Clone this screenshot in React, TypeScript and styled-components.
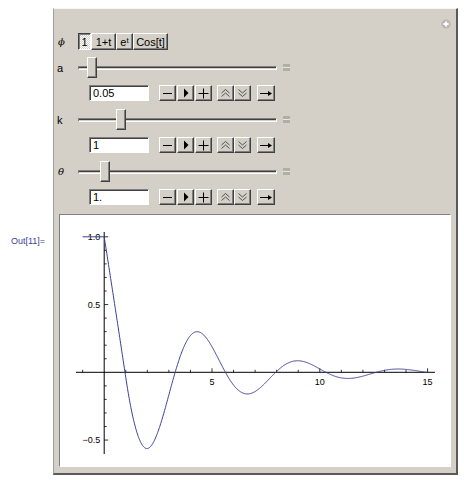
import React, { useMemo } from 'react';
import styled, { createGlobalStyle, css } from 'styled-components';

const GlobalStyle = createGlobalStyle`
  html, body {
    margin: 0;
    padding: 0;
    background: #ffffff;
  }
  body {
    font-family: "Liberation Sans", Arial, sans-serif;
  }
`;

const raised = css`
  border-style: solid;
  border-width: 1px;
  border-color: #ffffff #404040 #404040 #ffffff;
  box-shadow: inset -1px -1px 0 #808080;
`;

const Page = styled.div`
  display: flex;
  padding-top: 8px;
`;

const OutCell = styled.div`
  width: 53px;
  flex: none;
  box-sizing: border-box;
  padding: 228px 0 0 11px;
  font: 9px/11px "Liberation Sans", Arial, sans-serif;
  color: #40409a;
  white-space: nowrap;
`;

const Panel = styled.div`
  width: 405px;
  flex: none;
  box-sizing: border-box;
  display: flex;
  flex-direction: column;
  padding-bottom: 6px;
  background: #d4d0c8;
  border-style: solid;
  border-width: 1px 2px 2px 1px;
  border-color: #f6f5f1 #5a5a5a #5a5a5a #a0a0a0;
`;

const Header = styled.div`
  display: flex;
  justify-content: flex-end;
  height: 24px;
  box-sizing: border-box;
  padding: 10px 5px 0 0;
`;

const Row = styled.div<{ $gap?: number }>`
  display: flex;
  align-items: center;
  margin-top: ${({ $gap }) => $gap ?? 0}px;
`;

const LabelCell = styled.div<{ $greek?: boolean }>`
  width: 24px;
  flex: none;
  box-sizing: border-box;
  padding-left: 3px;
  font-size: 11px;
  line-height: 12px;
  color: #000;
  ${({ $greek }) =>
    $greek &&
    css`
      font-family: "DejaVu Serif", "Liberation Serif", serif;
      font-style: italic;
      font-size: 10px;
      padding-left: 4px;
    `}
`;

const SetterBar = styled.div`
  display: flex;
`;

const SetterButton = styled.div<{ $active?: boolean; $width: number }>`
  width: ${({ $width }) => $width}px;
  height: 17px;
  box-sizing: border-box;
  display: flex;
  align-items: center;
  justify-content: center;
  font-size: 11px;
  color: #000;
  white-space: nowrap;
  ${({ $active }) =>
    $active
      ? css`
          border-style: solid;
          border-width: 1px;
          border-color: #404040 #ffffff #ffffff #404040;
          box-shadow: inset 1px 1px 0 #808080;
          background-color: #d4d0c8;
          background-image: repeating-conic-gradient(#ffffff 0 25%, #d4d0c8 0 50%);
          background-size: 2px 2px;
        `
      : css`
          ${raised};
          background: #d4d0c8;
        `}
  sup {
    font-size: 8px;
    line-height: 0;
    position: relative;
    top: -1px;
    vertical-align: super;
  }
`;

const SliderBox = styled.div`
  position: relative;
  width: 199px;
  height: 21px;
  display: flex;
  align-items: center;
`;

const Track = styled.div`
  width: 100%;
  height: 4px;
  box-sizing: border-box;
  border-style: solid;
  border-width: 1px;
  border-color: #808080 #ffffff #ffffff #808080;
  background: linear-gradient(#404040 0 1px, #d4d0c8 1px);
`;

const Thumb = styled.div`
  position: absolute;
  top: 0;
  width: 10px;
  height: 21px;
  box-sizing: border-box;
  background: #d4d0c8;
  ${raised};
`;

const EndMark = styled.div`
  margin-left: 6px;
  width: 7px;
  height: 7px;
  box-sizing: border-box;
  border-top: 3px solid #b2aea6;
  border-bottom: 3px solid #b2aea6;
  background: #e8e6e2;
`;

const InputRow = styled.div<{ $gap: number }>`
  display: flex;
  align-items: center;
  margin-top: ${({ $gap }) => $gap}px;
  padding-left: 35px;
`;

const NumberField = styled.div`
  width: 60px;
  height: 16px;
  box-sizing: border-box;
  padding: 0 3px;
  display: flex;
  align-items: center;
  font-size: 11px;
  color: #000;
  background: #ffffff;
  border-style: solid;
  border-width: 1px;
  border-color: #808080 #ffffff #ffffff #808080;
  box-shadow: inset 1px 1px 0 #404040;
`;

const ButtonGroup = styled.div<{ $offset: number; $spacing: number }>`
  display: flex;
  gap: ${({ $spacing }) => $spacing}px;
  margin-left: ${({ $offset }) => $offset}px;
`;

const StepButton = styled.div<{ $width?: number }>`
  width: ${({ $width }) => $width ?? 17}px;
  height: 16px;
  box-sizing: border-box;
  display: flex;
  align-items: center;
  justify-content: center;
  background: #d4d0c8;
  ${raised};
  svg {
    display: block;
  }
`;

const PlotPane = styled.div`
  margin: 9px 5px 0 5px;
  height: 253px;
  box-sizing: border-box;
  background: #ffffff;
  border-style: solid;
  border-width: 1px;
  border-color: #808080 #ffffff #ffffff #808080;
  svg {
    display: block;
  }
`;

const AddIcon = () => (
  <svg width="10" height="10" viewBox="0 0 10 10">
    <circle cx="5" cy="5" r="4.6" fill="#bbb8b1" />
    <path d="M5 2.4v5.2M2.4 5h5.2" stroke="#ffffff" strokeWidth="1.8" />
  </svg>
);

const MinusGlyph = () => (
  <svg width="11" height="14" viewBox="0 0 11 14">
    <path d="M1 7.5h9" stroke="#000" strokeWidth="1" />
  </svg>
);

const PlayGlyph = () => (
  <svg width="11" height="14" viewBox="0 0 11 14">
    <path d="M4 2.5L8.5 7L4 11.5Z" fill="#000" />
  </svg>
);

const PlusGlyph = () => (
  <svg width="11" height="14" viewBox="0 0 11 14">
    <path d="M0.5 7.5h10M5.5 2.5v10" stroke="#000" strokeWidth="1" />
  </svg>
);

const FasterGlyph = () => (
  <svg width="11" height="14" viewBox="0 0 11 14">
    <path d="M1.5 7L5.5 3.5L9.5 7M1.5 10.5L5.5 7L9.5 10.5" fill="none" stroke="#444" strokeWidth="0.9" />
  </svg>
);

const SlowerGlyph = () => (
  <svg width="11" height="14" viewBox="0 0 11 14">
    <path d="M1.5 3.5L5.5 7L9.5 3.5M1.5 7L5.5 10.5L9.5 7" fill="none" stroke="#444" strokeWidth="0.9" />
  </svg>
);

const DirectionGlyph = () => (
  <svg width="14" height="14" viewBox="0 0 14 14">
    <path d="M1 7.5h9" stroke="#000" strokeWidth="1" />
    <path d="M9 5L13 7.5L9 10Z" fill="#000" />
  </svg>
);

type Param = {
  label: string;
  greek?: boolean;
  value: number;
  text: string;
  min: number;
  max: number;
};

const params: Param[] = [
  { label: 'a', value: 0.05, text: '0.05', min: 0, max: 1 },
  { label: 'k', value: 1, text: '1', min: 0, max: 5 },
  { label: 'θ', greek: true, value: 1, text: '1.', min: 0.1, max: 8 },
];

const choices = [
  { key: '1', width: 13 },
  { key: '1+t', width: 25 },
  { key: 'e^t', width: 17 },
  { key: 'Cos[t]', width: 35 },
];

const ParamControl = ({ p, first }: { p: Param; first: boolean }) => {
  const left = ((p.value - p.min) / (p.max - p.min)) * 189;
  return (
    <>
      <Row $gap={first ? 7 : 8}>
        <LabelCell $greek={p.greek}>{p.label}</LabelCell>
        <SliderBox>
          <Track />
          <Thumb style={{ left }} />
        </SliderBox>
        <EndMark />
      </Row>
      <InputRow $gap={7}>
        <NumberField>{p.text}</NumberField>
        <ButtonGroup $offset={10} $spacing={1}>
          <StepButton><MinusGlyph /></StepButton>
          <StepButton><PlayGlyph /></StepButton>
          <StepButton><PlusGlyph /></StepButton>
        </ButtonGroup>
        <ButtonGroup $offset={5} $spacing={0}>
          <StepButton><FasterGlyph /></StepButton>
          <StepButton><SlowerGlyph /></StepButton>
        </ButtonGroup>
        <ButtonGroup $offset={6} $spacing={0}>
          <StepButton $width={18}><DirectionGlyph /></StepButton>
        </ButtonGroup>
      </InputRow>
    </>
  );
};

// delay equation y'(t) = a y(t) - k y(t - theta), constant history y = 1
const solveDelay = (a: number, k: number, theta: number, T = 15, dt = 0.001) => {
  const n = Math.round(T / dt);
  const lag = Math.max(1, Math.round(theta / dt));
  const y = new Float64Array(n + 1);
  y[0] = 1;
  const delayed = (i: number) => (i - lag >= 0 ? y[i - lag] : 1);
  for (let i = 0; i < n; i++) {
    const f0 = a * y[i] - k * delayed(i);
    const yp = y[i] + dt * f0;
    const f1 = a * yp - k * delayed(i + 1);
    y[i + 1] = y[i] + (dt / 2) * (f0 + f1);
  }
  return { y, dt };
};

const W = 390;
const H = 251;
const X0 = 44.2;
const Y0 = 157.3;
const SX = 21.56;
const SY = 135.5;
const px = (t: number) => X0 + SX * t;
const py = (v: number) => Y0 - SY * v;

const Plot = () => {
  const path = useMemo(() => {
    const { y, dt } = solveDelay(0.036, 1.055, 1);
    const pts: string[] = [`M${px(-1).toFixed(2)} ${py(1).toFixed(2)}`, `L${px(0).toFixed(2)} ${py(1).toFixed(2)}`];
    const step = Math.round(0.02 / dt);
    for (let i = step; i < y.length; i += step) {
      pts.push(`L${px(i * dt).toFixed(2)} ${py(y[i]).toFixed(2)}`);
    }
    return pts.join(' ');
  }, []);

  const xTicks = [];
  for (let t = -1; t <= 15; t++) {
    if (t === 0) continue;
    const major = t % 5 === 0;
    xTicks.push(
      <line key={`x${t}`} x1={px(t)} x2={px(t)} y1={Y0} y2={Y0 - (major ? 4 : 2.5)} stroke="#000" strokeWidth="0.8" />
    );
  }
  const yTicks = [];
  for (let i = -5; i <= 10; i++) {
    if (i === 0) continue;
    const major = i % 5 === 0;
    const v = i / 10;
    yTicks.push(
      <line key={`y${i}`} x1={X0} x2={X0 + (major ? 4 : 2.5)} y1={py(v)} y2={py(v)} stroke="#000" strokeWidth="0.8" />
    );
  }

  return (
    <svg width={W} height={H} viewBox={`0 0 ${W} ${H}`}>
      <g fontFamily='"Liberation Sans", Arial, sans-serif' fontSize="9" fill="#000">
        {[5, 10, 15].map((t) => (
          <text key={t} x={px(t)} y={Y0 + 12.3} textAnchor="middle">{t}</text>
        ))}
        {[
          [1, '1.0'],
          [0.5, '0.5'],
          [-0.5, '−0.5'],
        ].map(([v, s]) => (
          <text key={s as string} x={X0 - 4} y={py(v as number) + 3.3} textAnchor="end">{s}</text>
        ))}
      </g>
      <line x1={16} x2={375} y1={Y0} y2={Y0} stroke="#000" strokeWidth="1" />
      <line x1={X0} x2={X0} y1={17} y2={239} stroke="#000" strokeWidth="1" />
      {xTicks}
      {yTicks}
      <path d={path} fill="none" stroke="#3d3d99" strokeWidth="1" strokeLinejoin="round" />
    </svg>
  );
};

export default function App() {
  return (
    <>
      <GlobalStyle />
      <Page>
        <OutCell>Out[11]=</OutCell>
        <Panel>
          <Header>
            <AddIcon />
          </Header>
          <Row>
            <LabelCell $greek>ϕ</LabelCell>
            <SetterBar>
              {choices.map((c, i) => (
                <SetterButton key={c.key} $width={c.width} $active={i === 0}>
                  {c.key === 'e^t' ? (
                    <>
                      e<sup>t</sup>
                    </>
                  ) : (
                    c.key
                  )}
                </SetterButton>
              ))}
            </SetterBar>
          </Row>
          {params.map((p, i) => (
            <ParamControl key={p.label} p={p} first={i === 0} />
          ))}
          <PlotPane>
            <Plot />
          </PlotPane>
        </Panel>
      </Page>
    </>
  );
}
